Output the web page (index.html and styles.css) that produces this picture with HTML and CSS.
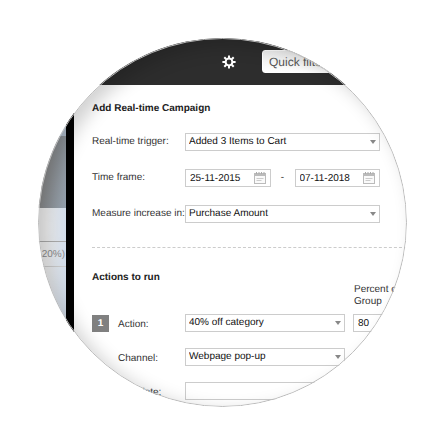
FILE: index.html
```html
<!DOCTYPE html>
<html lang="en">
<head>
<meta charset="UTF-8" />
<meta name="viewport" content="width=device-width, initial-scale=1.0">
<title>Add Real-time Campaign</title>
<link rel="stylesheet" href="styles.css">
</head>
<body>

<svg class="sprite" width="0" height="0" aria-hidden="true">
  <symbol id="calendar" viewBox="0 0 12 12">
    <rect x="0.5" y="1.5" width="11" height="10" fill="#fafafa" stroke="#bbb" />
    <rect x="0" y="1" width="12" height="3" fill="#bbb" />
    <path d="M2.5 0v2M5 0v2M7.5 0v2M10 0v2" stroke="#aaa" />
    <path d="M2.5 6.5h7M2.5 8.5h5" stroke="#ccc" />
  </symbol>
</svg>

<main class="lens">
  <!-- Page behind the dialog -->
  <aside class="backdrop">
    <div class="backdrop-top"></div>
    <div class="backdrop-banner"></div>
    <div class="backdrop-list">
      <p class="backdrop-row">20%)</p>
    </div>
  </aside>

  <!-- Campaign dialog -->
  <div class="dialog">
    <header class="topbar">
      <button class="settings" type="button" aria-label="Settings">
        <svg width="14" height="14" viewBox="0 0 14 14">
          <circle cx="7" cy="7" r="3.4" fill="none" stroke="#fff" stroke-width="2" />
          <path d="M7 0.4v2.8M7 10.8v2.8M0.4 7h2.8M10.8 7h2.8M2.3 2.3l2 2M9.7 9.7l2 2M2.3 11.7l2-2M9.7 4.3l2-2" stroke="#fff" stroke-width="2" />
        </svg>
      </button>
      <input class="quick" type="text" aria-label="Quick filter" placeholder="Quick filter">
    </header>

    <form class="campaign">
      <h1>Add Real-time Campaign</h1>
      <div class="rows">
        <div class="row">
          <label for="trigger">Real-time trigger:</label>
          <div class="select">
            <select id="trigger"><option>Added 3 Items to Cart</option></select>
          </div>
        </div>
        <div class="row">
          <label for="from">Time frame:</label>
          <div class="dates">
            <div class="date">
              <input id="from" type="text" value="25-11-2015">
              <svg width="12" height="12"><use href="#calendar" /></svg>
            </div>
            <span>-</span>
            <div class="date">
              <input type="text" value="07-11-2018" aria-label="End date">
              <svg width="12" height="12"><use href="#calendar" /></svg>
            </div>
          </div>
        </div>
        <div class="row">
          <label for="measure">Measure increase in:</label>
          <div class="select">
            <select id="measure"><option>Purchase Amount</option></select>
          </div>
        </div>
      </div>

      <hr>

      <h2>Actions to run</h2>
      <div class="actions">
        <label class="percent-label" for="percent">Percent of<br>Group</label>
        <span class="number">1</span>
        <label for="action">Action:</label>
        <div class="select">
          <select id="action"><option>40% off category</option></select>
        </div>
        <input class="percent" id="percent" type="text" value="80">

        <label class="indent" for="channel">Channel:</label>
        <div class="select">
          <select id="channel"><option>Webpage pop-up</option></select>
        </div>

        <label class="indent" for="template">Template:</label>
        <input class="template" id="template" type="text">
      </div>
    </form>
  </div>
</main>

</body>
</html>
```
FILE: styles.css
```css
* {
  box-sizing: border-box;
  margin: 0;
  padding: 0;
}
body {
  font-family: "Liberation Sans", Arial, sans-serif;
  font-size: 10px;
  line-height: 12px;
  text-rendering: geometricPrecision;
  color: #333;
  background: #fff;
  padding: 38px;
}
input,
select {
  font: inherit;
  text-rendering: inherit;
  color: #111;
  width: 100%;
  min-width: 0;
  height: 18px;
  border: 1px solid #ccc;
  border-radius: 0;
  background: #fff;
}
.sprite {
  position: absolute;
}

/* Round window */
.lens {
  position: relative;
  display: flex;
  aspect-ratio: 1;
  border-radius: 50%;
  overflow: hidden;
}
.lens::after {
  content: "";
  position: absolute;
  inset: 0;
  border: 1px solid #bbb;
  border-radius: 50%;
  box-shadow: inset 9px 6px 18px rgba(0, 0, 0, 0.18);
  pointer-events: none;
}

.backdrop {
  flex: 0 0 28px;
  display: flex;
  flex-direction: column;
}
.backdrop-top {
  height: 98px;
  background: #b3c1d1;
}
.backdrop-banner {
  height: 72px;
  background: linear-gradient(100deg, #8b8b8b 30%, #93a0ad);
}
.backdrop-list {
  flex: 1;
  padding-top: 33px;
  background: linear-gradient(90deg, #f0f0f0 30%, #d3deec);
}
.backdrop-row {
  height: 26px;
  border-top: 1px solid #aaa;
  border-bottom: 1px solid #ccc;
  padding-right: 1px;
  color: #8c8c8c;
  font-size: 10px;
  line-height: 26px;
  text-align: right;
}

.dialog {
  flex: 1;
  min-width: 0;
  border-left: 8px solid #000;
  background: #fff;
}
.topbar {
  display: flex;
  align-items: center;
  gap: 26px;
  height: 47px;
  padding-left: 148px;
  background: #2d2d2d;
}
.settings {
  display: flex;
  border: none;
  background: none;
  cursor: pointer;
}
.quick {
  flex: 1;
  height: 23px;
  padding: 0 6px;
  border-color: #fff;
  border-radius: 3px;
  background: linear-gradient(#eee, #fff);
  font-size: 12px;
}
.quick::placeholder {
  color: #555;
}

.campaign {
  padding: 18px 0 0 18px;
}
h1,
h2 {
  font-size: 10px;
  line-height: 12px;
  color: #222;
}
.rows {
  display: grid;
  gap: 18px;
  margin: 18px 27px 24px 0;
}
.row {
  display: grid;
  grid-template-columns: 93px 1fr;
  align-items: center;
}
.select {
  position: relative;
}
.select select {
  display: block;
  padding: 0 16px 0 3px;
  appearance: none;
}
.select::after {
  content: "";
  position: absolute;
  top: 7px;
  right: 4px;
  border: 3px solid transparent;
  border-top: 4px solid #888;
  border-bottom: none;
  pointer-events: none;
}
.dates {
  display: grid;
  grid-template-columns: 1fr 24px 1fr;
  align-items: center;
  text-align: center;
}
.date {
  display: flex;
  align-items: center;
  height: 18px;
  padding: 0 4px;
  border: 1px solid #ccc;
}
.date input {
  height: 16px;
  border: none;
}
.date svg {
  flex: none;
}
hr {
  border: none;
  border-top: 1px dashed #ccc;
  margin-bottom: 24px;
}

.actions {
  display: grid;
  grid-template-columns: 17px 76px 160px 1fr;
  align-items: center;
  row-gap: 16px;
}
.actions label {
  padding: 4px 0 0 9px;
}
.actions .percent-label {
  grid-column: 4;
  margin-bottom: -10px;
  padding-top: 0;
}
.number {
  height: 17px;
  background: #808080;
  color: #fff;
  font-weight: bold;
  line-height: 17px;
  text-align: center;
}
.actions .indent {
  grid-column: 2;
}
.percent {
  width: auto;
  margin-left: 8px;
  padding-left: 4px;
}
.template {
  grid-column: 3 / 5;
}
```
